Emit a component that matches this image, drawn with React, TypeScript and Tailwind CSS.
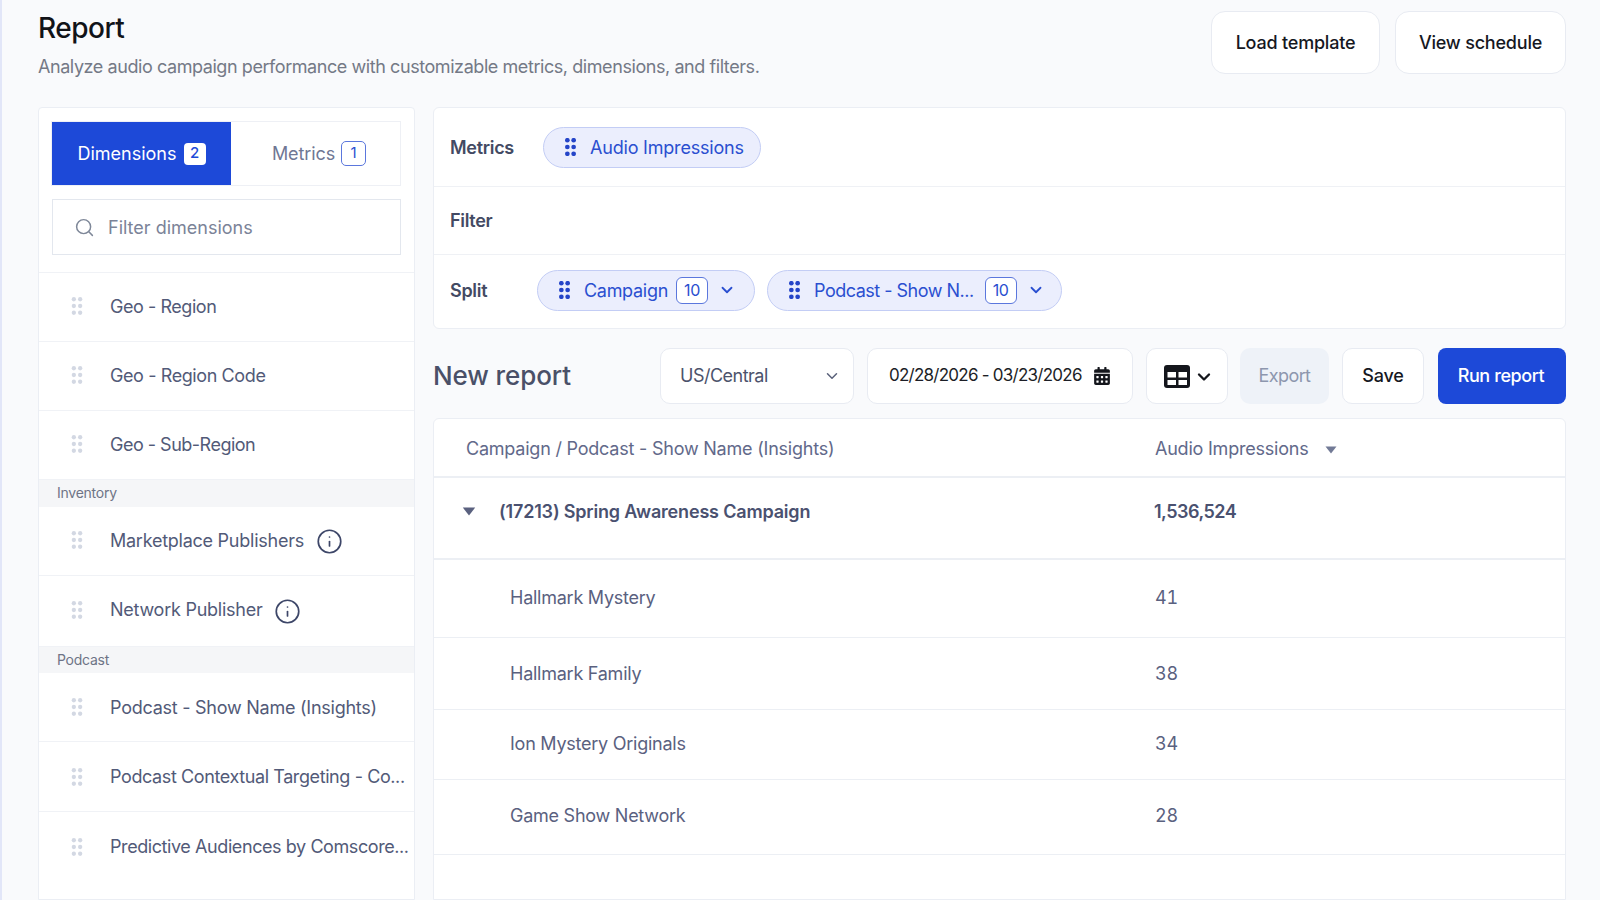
import { ChevronDown, Info, Search } from "lucide-react";
import { FaCalendarAlt } from "react-icons/fa";

function Grip({ className, r = 2.4 }: { className: string; r?: number }) {
  return (
    <svg viewBox="0 0 12 20" className={className} fill="currentColor" aria-hidden="true">
      {[2.5, 10, 17.5].map((y) => (
        <g key={y}>
          <circle cx="2.5" cy={y} r={r} />
          <circle cx="9.5" cy={y} r={r} />
        </g>
      ))}
    </svg>
  );
}

function Caret({ className }: { className: string }) {
  return (
    <svg viewBox="0 0 12 8" className={className} fill="currentColor" aria-hidden="true">
      <path d="M0.5 0.5h11L6 7.5z" />
    </svg>
  );
}

function Row({
  label,
  info,
  h = "h-[69px]",
  last,
  pad = "",
  track = "tracking-[-0.25px]",
}: {
  label: string;
  info?: boolean;
  h?: string;
  last?: boolean;
  pad?: string;
  track?: string;
}) {
  return (
    <div className={`${h} ${pad} shrink-0 flex items-center pl-[32px] ${last ? "" : "border-b border-[#f0f2f6]"}`}>
      <Grip className="w-[12px] h-[18px] text-[#d3d8e3] shrink-0" />
      <span className={`ml-[27px] text-[18px] ${track} text-[#525a78] whitespace-nowrap`}>{label}</span>
      {info && <Info className="ml-[12px] w-[27px] h-[27px] text-[#3d4668] mt-[3px] shrink-0" strokeWidth={1.5} />}
    </div>
  );
}

function Group({ label, h }: { label: string; h: string }) {
  return (
    <div className={`${h} shrink-0 flex items-center bg-[#f5f6f8] pl-[18px] pb-[2px] text-[14px] tracking-[-0.25px] text-[#6e7486]`}>{label}</div>
  );
}

function Chip({ label, count, cls, gap = "ml-[8px]" }: { label: string; count?: string; cls: string; gap?: string }) {
  return (
    <div className={`${cls} h-[41px] shrink-0 flex items-center rounded-full border-[1.5px] border-[#c3cdf5] bg-[#ebeefd] pl-[20px] text-[#2a4fd0]`}>
      <Grip className="w-[13px] h-[18px] shrink-0 text-[#2444c8]" r={2.6} />
      <span className="ml-[13px] text-[18px] whitespace-nowrap">{label}</span>
      {count && (
        <>
          <span className={`${gap} w-[32px] h-[27px] flex items-center justify-center rounded-[6px] border-[1.5px] border-[#5b77dd] bg-white text-[16px] tracking-[-0.3px]`}>{count}</span>
          <ChevronDown className="ml-[10px] w-[18px] h-[18px]" strokeWidth={2.4} />
        </>
      )}
    </div>
  );
}

function DataRow({ name, value, h, pad }: { name: string; value: string; h: string; pad: string }) {
  return (
    <div className={`${h} ${pad} shrink-0 flex items-center border-b border-[#eceff4] text-[18px] tracking-[-0.25px] text-[#5a617f]`}>
      <span className="w-[721px] pl-[76px]">{name}</span>
      <span className="tabular-nums">{value}</span>
    </div>
  );
}

export default function App() {
  return (
    <div className="h-screen overflow-hidden border-l-2 border-[#e2e6f8] bg-[#f9fafc] pl-[36px] pr-[34px] font-['Inter',sans-serif]">
      <header className="h-[107px] flex justify-between">
        <div>
          <h1 className="mt-[8px] text-[28px] leading-[40px] font-medium tracking-[-0.5px] text-[#111318]">Report</h1>
          <p className="mt-[1px] text-[18px] leading-[36px] tracking-[-0.43px] text-[#747986]">
            Analyze audio campaign performance with customizable metrics, dimensions, and filters.
          </p>
        </div>
        <div className="mt-[11px] flex gap-[15px] text-[18px] font-medium tracking-[-0.2px] text-[#16181f]">
          <button className="w-[169px] h-[63px] rounded-[14px] border border-[#e8ebf2] bg-white">Load template</button>
          <button className="w-[171px] h-[63px] rounded-[14px] border border-[#e8ebf2] bg-white">View schedule</button>
        </div>
      </header>

      <div className="flex gap-[18px]">
        <aside className="w-[377px] h-[793px] shrink-0 flex flex-col overflow-hidden rounded-t-[4px] border border-[#ebeef4] bg-white">
          <div className="pl-[12px] pr-[13px] pt-[13px] pb-[17px] border-b border-[#f0f2f6]">
            <div className="flex h-[65px] border border-[#eef0f5]">
              <div className="w-[179px] flex items-center justify-center gap-[7px] bg-[#1d49d8] text-[18px] text-white">
                Dimensions
                <span className="w-[22px] h-[22px] flex items-center justify-center rounded-[4px] bg-white text-[15px] font-medium text-[#1d49d8]">2</span>
              </div>
              <div className="flex-1 flex items-center justify-center gap-[6px] pl-[7px] text-[18px] tracking-[-0.1px] text-[#6f7794]">
                Metrics
                <span className="w-[25px] h-[25px] flex items-center justify-center rounded-[5px] border-[1.5px] border-[#5b77dd] text-[15px] text-[#2a4fd0]">1</span>
              </div>
            </div>
            <div className="mt-[13px] ml-[1px] h-[56px] flex items-center border border-[#e3e7ee] pl-[21px] text-[18px] text-[#7b8398]">
              <Search className="w-[21px] h-[21px] text-[#7f8899]" strokeWidth={1.7} />
              <span className="ml-[13px]">Filter dimensions</span>
            </div>
          </div>
          <Row label="Geo - Region" pad="pb-[2px]" track="tracking-[-0.45px]" />
          <Row label="Geo - Region Code" pad="pb-[2px]" track="tracking-[-0.4px]" />
          <Row label="Geo - Sub-Region" pad="pb-[2px]" track="tracking-[-0.5px]" />
          <Group label="Inventory" h="h-[27px]" />
          <Row label="Marketplace Publishers" info pad="pb-[2px]" />
          <Row label="Network Publisher" info h="h-[71px]" pad="pb-[3px]" />
          <Group label="Podcast" h="h-[26px]" />
          <Row label="Podcast - Show Name (Insights)" />
          <Row label="Podcast Contextual Targeting - Co..." h="h-[70px]" track="tracking-[-0.4px]" />
          <Row label="Predictive Audiences by Comscore..." last track="tracking-[-0.42px]" />
        </aside>

        <main className="flex-1 min-w-0 flex flex-col">
          <section className="h-[222px] shrink-0 flex flex-col rounded-[6px] border border-[#ebeef4] bg-white text-[18px] font-semibold tracking-[-0.3px] text-[#434a63]">
            <div className="h-[79px] pl-[16px] flex items-center border-b border-[#eff1f5]">
              <span className="w-[93px]">Metrics</span>
              <Chip label="Audio Impressions" cls="w-[218px] font-normal tracking-[-0.2px]" />
            </div>
            <div className="h-[68px] pl-[16px] flex items-center border-b border-[#eff1f5]">Filter</div>
            <div className="flex-1 pl-[16px] pb-[3px] flex items-center">
              <span className="w-[87px]">Split</span>
              <div className="flex gap-[12px] font-normal">
                <Chip label="Campaign" count="10" cls="w-[218px] tracking-[-0.3px]" />
                <Chip label="Podcast - Show N..." count="10" gap="ml-[11px]" cls="w-[295px] tracking-[-0.5px]" />
              </div>
            </div>
          </section>

          <div className="mt-[19px] h-[56px] shrink-0 flex items-center text-[18px]">
            <h2 className="w-[227px] pb-[2px] text-[26px] font-medium tracking-[-0.1px] text-[#4a5068]">New report</h2>
            <div className="w-[194px] h-full flex items-center justify-between rounded-[10px] border border-[#e8ebf2] bg-white pl-[19px] pr-[12px] pb-[2px] tracking-[-0.5px] text-[#4c536c]">
              US/Central
              <ChevronDown className="w-[18px] h-[18px] mt-[2px] text-[#5a617a]" strokeWidth={2} />
            </div>
            <div className="ml-[13px] w-[266px] h-full flex items-center justify-between rounded-[10px] border border-[#e8ebf2] bg-white pl-[21px] pr-[22px] text-[17px] tracking-[-0.75px] whitespace-nowrap text-[#1c1e26]">
              02/28/2026 - 03/23/2026
              <FaCalendarAlt className="w-[16px] h-[18px] text-[#14161c]" />
            </div>
            <div className="ml-[13px] w-[82px] h-full flex items-center justify-center gap-[4px] pl-[4px] rounded-[10px] border border-[#e8ebf2] bg-white text-[#14161c]">
              <svg viewBox="0 0 26 23" className="w-[26px] h-[23px] shrink-0" aria-hidden="true">
                <rect width="26" height="23" rx="3" fill="#14161c" />
                <path d="M3.5 7h8.5v5.5H3.5zM14.5 7H23v5.5h-8.5zM3.5 15h8.5v5H3.5zM14.5 15H23v5h-8.5z" fill="#fff" />
              </svg>
              <ChevronDown className="w-[20px] h-[20px] shrink-0 mt-[2px]" strokeWidth={2.8} />
            </div>
            <div className="ml-[12px] w-[89px] h-full flex items-center justify-center rounded-[10px] bg-[#eef2f8] pb-[2px] tracking-[-0.6px] text-[#8d97ae]">Export</div>
            <div className="ml-[13px] w-[82px] h-full flex items-center justify-center rounded-[10px] border border-[#e8ebf2] bg-white pb-[2px] font-medium tracking-[-0.2px] text-[#16181f]">Save</div>
            <div className="ml-[14px] flex-1 h-full flex items-center justify-center rounded-[8px] bg-[#1d49d8] pb-[2px] pr-[2px] font-medium tracking-[-0.4px] text-white">Run report</div>
          </div>

          <section className="mt-[14px] h-[482px] shrink-0 flex flex-col rounded-t-[6px] border border-[#ebeef4] bg-white">
            <div className="h-[59px] shrink-0 flex items-center pt-[2px] border-b-2 border-[#eceff4] text-[18px] tracking-[-0.22px] text-[#62698a]">
              <span className="w-[721px] pl-[32px]">Campaign / Podcast - Show Name (Insights)</span>
              <span>Audio Impressions</span>
              <Caret className="ml-[17px] mt-[3px] w-[12px] h-[8px] text-[#727a96]" />
            </div>
            <div className="h-[82px] shrink-0 flex items-center pb-[14px] border-b-2 border-[#eceff4] text-[18px] font-semibold text-[#4a5170]">
              <div className="w-[721px] flex items-center pl-[28px]">
                <Caret className="w-[14px] h-[9px] text-[#5a617f]" />
                <span className="ml-[23px] tracking-[-0.18px]">(17213) Spring Awareness Campaign</span>
              </div>
              <span className="-ml-[1px] tracking-[-0.5px]">1,536,524</span>
            </div>
            <DataRow name="Hallmark Mystery" value="41" h="h-[78px]" pad="pb-[2px]" />
            <DataRow name="Hallmark Family" value="38" h="h-[72px]" pad="" />
            <DataRow name="Ion Mystery Originals" value="34" h="h-[70px]" pad="pb-[2px]" />
            <DataRow name="Game Show Network" value="28" h="h-[75px]" pad="pb-[4px]" />
          </section>
        </main>
      </div>
    </div>
  );
}
